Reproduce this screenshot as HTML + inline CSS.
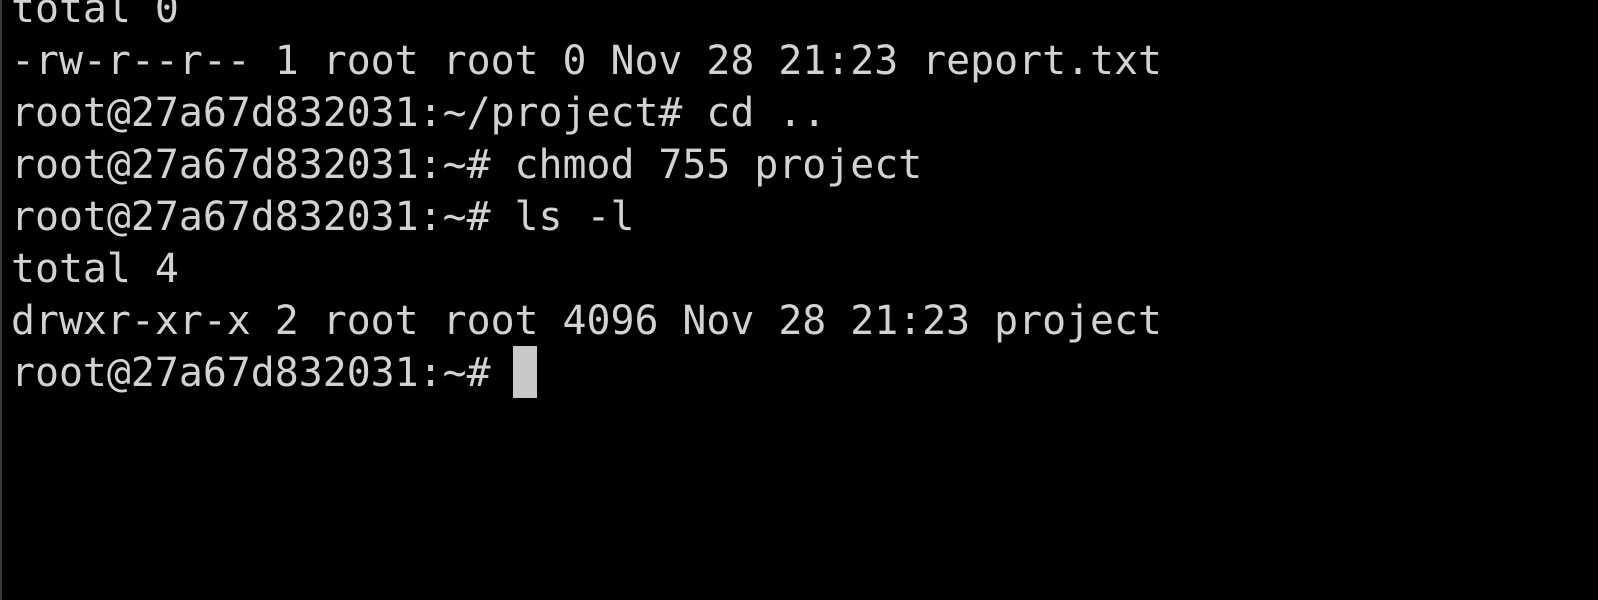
<!DOCTYPE html>
<html><head><meta charset="utf-8"><style>
html,body{margin:0;padding:0;background:#000;width:1598px;height:600px;overflow:hidden}
.b{position:absolute;left:0;top:0;width:2px;height:600px;background:#3a3a3a}
pre{position:absolute;left:11px;top:-17.5px;margin:0;font-family:"DejaVu Sans Mono","Liberation Mono",monospace;font-size:39.85px;line-height:52px;color:#d2d2d2;white-space:pre}
.c{position:absolute;left:513px;top:346px;width:24px;height:52px;background:#c8c8c8}
</style></head><body>
<div class="b"></div>
<pre>total 0
-rw-r--r-- 1 root root 0 Nov 28 21:23 report.txt
root@27a67d832031:~/project# cd ..
root@27a67d832031:~# chmod 755 project
root@27a67d832031:~# ls -l
total 4
drwxr-xr-x 2 root root 4096 Nov 28 21:23 project
root@27a67d832031:~# </pre>
<div class="c"></div>
</body></html>
